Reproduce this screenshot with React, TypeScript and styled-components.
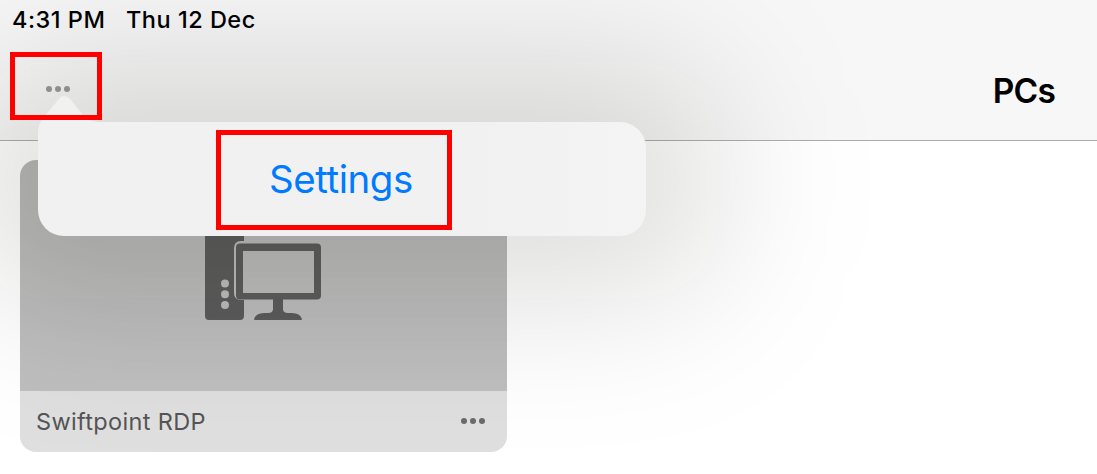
import styled, { createGlobalStyle } from "styled-components";

const GlobalStyle = createGlobalStyle`
  * {
    box-sizing: border-box;
  }
  body {
    margin: 0;
    font-family: Inter, "Liberation Sans", sans-serif;
    background-color: #ffffff;
  }
`;

const Screen = styled.div`
  position: relative;
  display: flex;
  flex-direction: column;
  width: 100%;
  height: 474px;
  overflow: hidden;
  background-color: #ffffff;
`;

const Header = styled.header`
  display: flex;
  flex-direction: column;
  height: 141px;
  background-color: #f7f7f7;
  border-bottom: 1px solid #adadad;
`;

const StatusBar = styled.div`
  display: flex;
  gap: 20px;
  height: 40px;
  padding-left: 12px;
  font-size: 23.5px;
  font-weight: 500;
  line-height: 40px;
  letter-spacing: 0.5px;
  white-space: nowrap;
  color: #000000;
  .time {
    width: 94px;
  }
`;

const NavBar = styled.div`
  display: flex;
  justify-content: space-between;
  align-items: center;
  height: 98px;
  padding: 0 42px 0 46px;
`;

const Title = styled.h1`
  margin: 0;
  padding-top: 4px;
  font-size: 33.5px;
  font-weight: 600;
  letter-spacing: -0.8px;
  color: #000000;
`;

const MoreButton = styled.button<{ $color: string }>`
  display: flex;
  gap: 3px;
  padding: 0;
  border: none;
  background: none;
  span {
    width: 6px;
    height: 6px;
    border-radius: 50%;
    background-color: ${(props) => props.$color};
  }
`;

const PcList = styled.main`
  padding: 19px 20px;
`;

const PcCard = styled.article`
  display: flex;
  flex-direction: column;
  width: 487px;
  height: 292px;
  border-radius: 16px;
  overflow: hidden;
`;

const Thumbnail = styled.div`
  display: flex;
  justify-content: center;
  align-items: flex-end;
  height: 231px;
  padding: 0 2px 71px 0;
  background: linear-gradient(#b8b8b8, #bfbfbf);
`;

const CardFooter = styled.div`
  display: flex;
  justify-content: space-between;
  align-items: center;
  height: 61px;
  padding: 0 22px 1px 16px;
  background-color: #dfdfdf;
  font-size: 23.5px;
  letter-spacing: 0.35px;
  color: #555555;
`;

const Popover = styled.div`
  position: absolute;
  top: 122px;
  left: 38px;
  display: flex;
  justify-content: center;
  align-items: center;
  width: 608px;
  height: 114px;
  border-radius: 26px;
  background: linear-gradient(90deg, #f1f1f1 70%, #f4f4f4);
`;

/* soft rounded halo around the popover, fading out to roughly 200px away */
const PopoverShadow = styled.div`
  position: absolute;
  top: 62px;
  left: -36px;
  width: 756px;
  height: 236px;
  border-radius: 80px;
  background-color: rgba(4, 4, 0, 0.135);
  filter: blur(76px);
  pointer-events: none;
`;

const Arrow = styled.svg`
  position: absolute;
  top: -26px;
  left: 0;
`;

const MenuItem = styled.button`
  padding: 0 2px 0 0;
  border: none;
  background: none;
  font-family: inherit;
  font-size: 38.5px;
  letter-spacing: -0.45px;
  color: #007aff;
`;

const Highlight = styled.div<{ $x: number; $y: number; $w: number; $h: number }>`
  position: absolute;
  left: ${(props) => props.$x}px;
  top: ${(props) => props.$y}px;
  width: ${(props) => props.$w}px;
  height: ${(props) => props.$h}px;
  border: 5px solid #ff0000;
  pointer-events: none;
`;

const Dots = ({ color }: { color: string }) => (
  <MoreButton $color={color} aria-label="More">
    <span />
    <span />
    <span />
  </MoreButton>
);

const ComputerIcon = () => (
  <svg width="116" height="98" viewBox="0 0 116 98" fill="#5c5c5c">
    <path
      fillRule="evenodd"
      d="M4 0H35Q39 0 39 4V19H35Q29 20 29 26V71Q29 77 35 78H39V94Q39 98 35 98H4Q0 98 0 94V4Q0 0 4 0ZM20 57.5a4 4 0 1 0 0 8a4 4 0 1 0 0-8ZM20 68.200a4 4 0 1 0 0 8a4 4 0 1 0 0-8ZM20 79a4 4 0 1 0 0 8a4 4 0 1 0 0-8Z"
    />
    <path
      fillRule="evenodd"
      d="M35 21.500H112Q116 21.500 116 25.500V73.500Q116 77.500 112 77.500H78V87Q78 91 83 91H87Q95 91 97 97Q97 98 96 98H50Q49 98 49 97Q51 91 59 91H63Q68 91 68 87V77.500H35Q31 77.500 31 73.500V25.500Q31 21.500 35 21.500ZM38 29V71H109V29Z"
    />
  </svg>
);

const App = () => {
  return (
    <>
      <GlobalStyle />
      <Screen>
        <Header>
          <StatusBar>
            <span className="time">4:31 PM</span>
            <span>Thu 12 Dec</span>
          </StatusBar>
          <NavBar>
            <Dots color="#999999" />
            <Title>PCs</Title>
          </NavBar>
        </Header>
        <PcList>
          <PcCard>
            <Thumbnail>
              <ComputerIcon />
            </Thumbnail>
            <CardFooter>
              <span>Swiftpoint RDP</span>
              <Dots color="#6b6b6b" />
            </CardFooter>
          </PcCard>
        </PcList>
        <PopoverShadow />
        <Popover>
          <Arrow width="62" height="54" viewBox="0 0 62 54">
            <path
              fill="#f1f1f1"
              d="M0 54V37Q0 27 6 21L20 4Q23 0 26 0Q29 0 33 4L44 18Q50 26 62 26V54Z"
            />
          </Arrow>
          <MenuItem>Settings</MenuItem>
        </Popover>
        <Highlight $x={10} $y={52} $w={92} $h={68} />
        <Highlight $x={216} $y={130} $w={236} $h={100} />
      </Screen>
    </>
  );
};

export default App;
